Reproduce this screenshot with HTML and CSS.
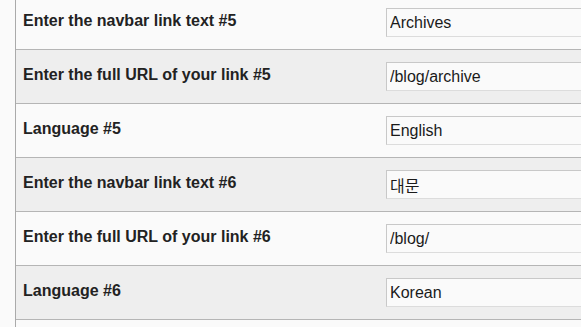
FILE: index.html
```html
<!DOCTYPE html>
<html lang="en">
<head>
<meta charset="utf-8">
<title>Navbar links</title>
<link rel="stylesheet" href="styles.css">
</head>
<body>
<div class="form">
  <div class="row">
    <label class="label">Enter the navbar link text #5</label>
    <div class="field"><input class="input" type="text" value="Archives"></div>
  </div>
  <div class="row alt">
    <label class="label">Enter the full URL of your link #5</label>
    <div class="field"><input class="input" type="text" value="/blog/archive"></div>
  </div>
  <div class="row">
    <label class="label">Language #5</label>
    <div class="field"><input class="input" type="text" value="English"></div>
  </div>
  <div class="row alt">
    <label class="label">Enter the navbar link text #6</label>
    <div class="field"><input class="input" type="text" value="대문"></div>
  </div>
  <div class="row">
    <label class="label">Enter the full URL of your link #6</label>
    <div class="field"><input class="input" type="text" value="/blog/"></div>
  </div>
  <div class="row alt">
    <label class="label">Language #6</label>
    <div class="field"><input class="input" type="text" value="Korean"></div>
  </div>
  <div class="row">
    <label class="label">&nbsp;</label>
    <div class="field"></div>
  </div>
</div>
</body>
</html>
```
FILE: styles.css
```css
html, body {
  margin: 0;
  padding: 0;
  background: #fafafa;
  overflow: hidden;
}
body {
  font-family: "Liberation Sans", Arial, "Noto Sans CJK KR", sans-serif;
  color: #222;
}
.form {
  margin-left: 15px;
  margin-top: -4px;
  border-left: 1px solid #aaaaaa;
}
.row {
  display: grid;
  grid-template-columns: 370px 1fr;
  height: 53px;
  border-bottom: 1px solid #b5b5b5;
  background: #fafafa;
}
.row.alt {
  background: #eeeeee;
}
.label {
  padding: 15px 0 0 7px;
  font-size: 16px;
  font-weight: bold;
  color: #222;
  line-height: 20px;
}
.field {
  padding-top: 12px;
  overflow: hidden;
}
.input {
  box-sizing: border-box;
  width: 260px;
  height: 29px;
  margin: 0;
  padding: 0 4px 0 3px;
  border: 1px solid #c8c8c8;
  border-bottom-color: #dcdcdc;
  background: #fafafa;
  font-family: "Liberation Sans", Arial, "Noto Sans CJK KR", sans-serif;
  font-size: 16px;
  color: #1a1a1a;
  outline: none;
}
```
